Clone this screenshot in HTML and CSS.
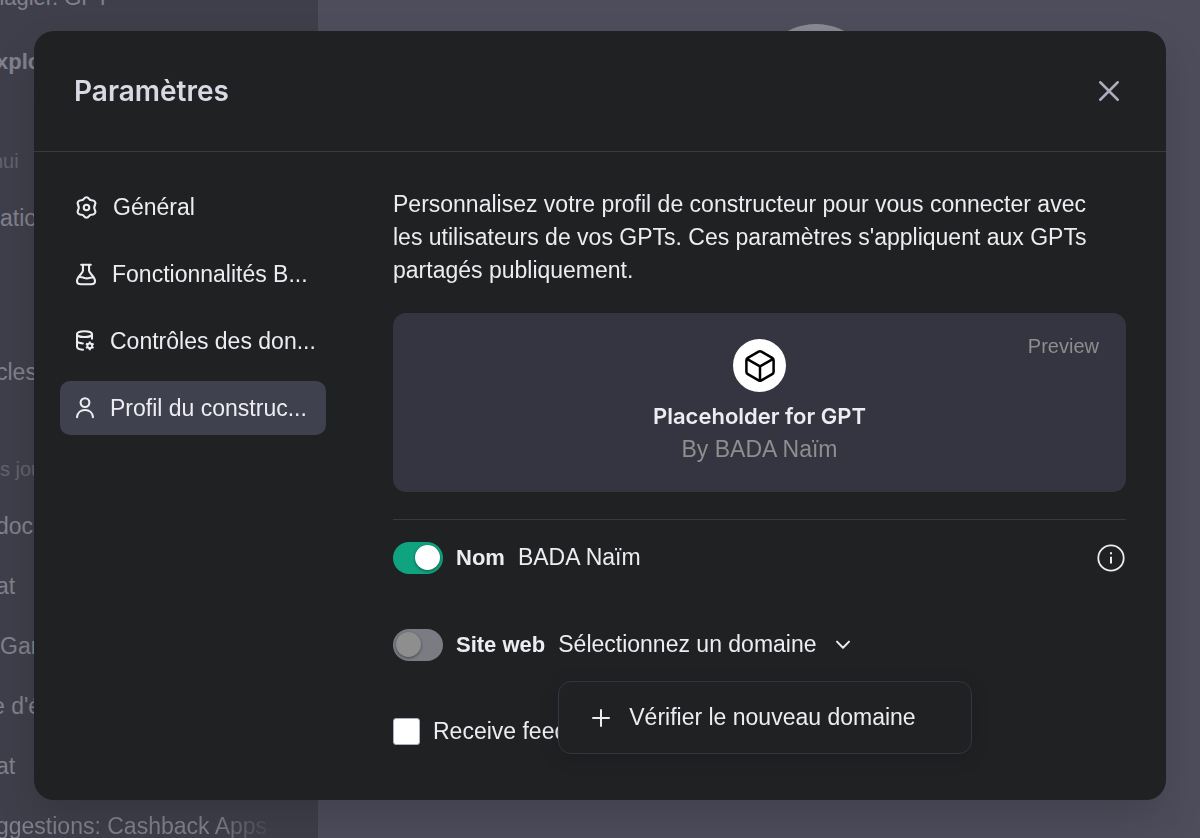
FILE: index.html
```html
<!DOCTYPE html>
<html lang="fr">
<head>
<meta charset="utf-8">
<meta name="viewport" content="width=device-width, initial-scale=1">
<title>Paramètres</title>
<link rel="stylesheet" href="styles.css">
</head>
<body>
<div class="app">
  <aside class="sidebar">
    <ul class="history history-top">
      <li class="deep">nagier. GPT</li>
      <li class="strong">xplorer</li>
    </ul>
    <h3 class="period deep">hui</h3>
    <ul class="history"><li class="flush">ations</li></ul>
    <ul class="history spaced"><li>cles</li></ul>
    <h3 class="period">s jours</h3>
    <ul class="history">
      <li>documents</li>
      <li>at</li>
      <li class="flush">Games</li>
      <li class="deep">e d'écran</li>
      <li>at</li>
      <li class="fade">ggestions: Cashback Apps</li>
    </ul>
  </aside>
  <main class="chat"><div class="chat-logo"></div></main>
</div>

<div class="overlay">
  <section class="modal" role="dialog" aria-labelledby="modal-title">
    <header class="modal-header">
      <h2 id="modal-title">Paramètres</h2>
      <button class="close" type="button" aria-label="Fermer">
        <svg width="30" height="30" viewBox="0 0 24 24" fill="none" stroke="currentColor" stroke-width="2" stroke-linecap="round"><path d="M5 5 19 19M19 5 5 19"/></svg>
      </button>
    </header>
    <div class="modal-body">
      <nav class="tabs">
        <button class="tab" type="button">
          <svg width="23" height="23" viewBox="0 0 24 24" fill="none" stroke="currentColor" stroke-width="2.2" stroke-linejoin="round"><path d="M9.6 2.7C10.7 .9 13.3 .9 14.4 2.7C15 3.9 16 4.5 17.3 4.5C20.3 4.4 22.2 6.6 20.9 9C20 10.6 20 13.4 20.9 15C22.2 17.4 20.3 19.6 17.3 19.5C16 19.5 15 20.1 14.4 21.3C13.3 23.1 10.7 23.1 9.6 21.3C9 20.1 8 19.5 6.7 19.5C3.7 19.6 1.8 17.4 3.1 15C4 13.4 4 10.6 3.1 9C1.8 6.6 3.7 4.4 6.7 4.5C8 4.5 9 3.9 9.6 2.7Z"/><circle cx="12" cy="12" r="2.9"/></svg>
          <span>Général</span>
        </button>
        <button class="tab" type="button">
          <svg width="22" height="23" viewBox="0 0 22 24" fill="none" stroke="currentColor" stroke-width="2.2" stroke-linecap="round" stroke-linejoin="round"><path d="M6 1.8H16M7.8 1.8V8.2C7.8 10.8 1.6 14.1 1.6 18.8C1.6 21.1 3.3 22.2 5.8 22.2H16.2C18.7 22.2 20.4 21.1 20.4 18.8C20.4 14.1 14.2 10.8 14.2 8.2V1.8M3.2 14.8C7 13.8 9.2 16.2 12 16C14.6 15.9 16.4 14.7 18.8 14.8"/></svg>
          <span>Fonctionnalités B...</span>
        </button>
        <button class="tab" type="button">
          <svg width="20" height="22" viewBox="0 0 20 22" fill="none" stroke="currentColor" stroke-width="2"><ellipse cx="9.5" cy="4.2" rx="7.5" ry="2.9"/><path stroke-linecap="round" d="M2 4.2V16.6C2 18.4 4.5 19.6 8 19.8M2 10.6C2 12.2 4.6 13.2 7.8 13.4M17 4.2V8.8"/><circle cx="14.8" cy="15.8" r="2.4"/><path stroke-width="2" d="M14.8 11.4V13.4M14.8 18.2V20.2M11 13.6 12.7 14.6M16.9 17 18.6 18M18.6 13.6 16.9 14.6M12.7 17 11 18"/></svg>
          <span>Contrôles des don...</span>
        </button>
        <button class="tab active" type="button" aria-current="page">
          <svg width="20" height="22" viewBox="0 0 20 22" fill="none" stroke="currentColor" stroke-width="2.1" stroke-linecap="round"><circle cx="10" cy="5.6" r="4.4"/><path d="M2 20.2C2.4 15.8 5.6 13 10 13S17.6 15.8 18 20.2"/></svg>
          <span>Profil du construc...</span>
        </button>
      </nav>

      <div class="panel">
        <p class="intro">Personnalisez votre profil de constructeur pour vous connecter avec les utilisateurs de vos GPTs. Ces paramètres s'appliquent aux GPTs partagés publiquement.</p>

        <div class="preview">
          <span class="preview-tag">Preview</span>
          <div class="avatar">
            <svg width="34" height="34" viewBox="0 0 34 34" fill="none" stroke="#000" stroke-width="2.5" stroke-linejoin="round"><path d="M15.6 2.6Q17 1.8 18.4 2.6L29.2 8.8Q30.6 9.6 30.6 11.2V22.8Q30.6 24.4 29.2 25.2L18.4 31.4Q17 32.2 15.6 31.4L4.8 25.2Q3.4 24.4 3.4 22.8V11.2Q3.4 9.6 4.8 8.8ZM3.8 9.8 17 17.3 30.2 9.8M17 17.3V31.8"/></svg>
          </div>
          <strong class="preview-name">Placeholder for GPT</strong>
          <span class="preview-by">By BADA Naïm</span>
        </div>

        <div class="settings">
          <div class="row">
            <input class="switch" type="checkbox" id="show-name" checked>
            <label class="row-label" for="show-name">Nom</label>
            <span>BADA Naïm</span>
            <button class="info" type="button" aria-label="Informations">
              <svg width="30" height="30" viewBox="0 0 30 30" fill="none" stroke="currentColor"><circle cx="15" cy="15" r="12.7" stroke-width="1.8"/><path stroke-width="2" d="M15 13.8V20.4M15 9.2V11.2"/></svg>
            </button>
          </div>
          <div class="row">
            <input class="switch" type="checkbox" id="show-site" disabled>
            <label class="row-label" for="show-site">Site web</label>
            <div class="domain">
              <select class="domain-select" aria-label="Domaine"><option>Sélectionnez un domaine</option></select>
              <svg class="chevron" width="16" height="10" viewBox="0 0 16 10" fill="none" stroke="currentColor" stroke-width="2" stroke-linecap="round" stroke-linejoin="round"><path d="M2 1.6 8 7.8 14 1.6"/></svg>
              <div class="menu">
                <button class="menu-item" type="button">
                  <svg width="20" height="20" viewBox="0 0 20 20" fill="none" stroke="currentColor" stroke-width="2" stroke-linecap="round"><path d="M10 2V18M2 10H18"/></svg>
                  <span>Vérifier le nouveau domaine</span>
                </button>
              </div>
            </div>
          </div>
          <div class="row">
            <input class="check" type="checkbox" id="feedback">
            <label for="feedback">Receive feedback emails</label>
          </div>
        </div>
      </div>
    </div>
  </section>
</div>
</body>
</html>
```
FILE: styles.css
```css
* { box-sizing: border-box; }

body {
  margin: 0;
  background: #4d4d5c;
  color: #ececf1;
  font: 23px/33px "Liberation Sans", Arial, sans-serif;
}

h2, h3, p, ul { margin: 0; padding: 0; font-weight: 400; }

button, select, input { font: inherit; color: inherit; margin: 0; }

button {
  border: 0;
  padding: 0;
  background: none;
  cursor: pointer;
}

svg { display: block; flex: none; }

.app {
  display: flex;
  height: 100vh;
  overflow: hidden;
}

.sidebar {
  flex: none;
  width: 318px;
  overflow: hidden;
  background: #3f3f4b;
  color: #81818d;
}

.history { list-style: none; }
.history li {
  height: 60px;
  margin-left: -4px;
  line-height: 60px;
  white-space: nowrap;
}
.history-top { margin-top: -34px; }
.history-top li { height: 64px; line-height: 64px; font-size: 22px; }
.history .strong { font-weight: 700; }
.history.spaced { padding-top: 94px; }
.history .flush { margin-left: 0; }
.history .deep, .period.deep { margin-left: -8px; }
.history .fade {
  width: 280px;
  background: linear-gradient(90deg, #81818d 220px, #3f3f4b 280px);
  background-clip: text;
  color: transparent;
}

.period {
  margin-top: 40px;
  height: 54px;
  font-size: 20px;
  line-height: 54px;
  white-space: nowrap;
  color: #62626e;
}

.chat {
  flex: 1;
  display: flex;
  justify-content: center;
  padding: 24px 0 0 114px;
}
.chat-logo {
  width: 120px;
  height: 120px;
  border-radius: 50%;
  background: #898993;
}

.overlay {
  position: fixed;
  inset: 0;
  padding: 31px 34px 38px;
  display: flex;
}

.modal {
  flex: 1;
  display: flex;
  flex-direction: column;
  border-radius: 20px;
  background: #202123;
  box-shadow: 0 20px 40px rgba(0, 0, 0, 0.14);
}

.modal-header {
  display: flex;
  align-items: center;
  justify-content: space-between;
  padding: 40px;
  border-bottom: 1px solid #3a3b3e;
}
.modal-header h2 {
  font-family: Inter, sans-serif;
  font-size: 28px;
  font-weight: 600;
  line-height: 40px;
  color: #d9d9e3;
}
.close { padding: 0 2px; color: #acacbe; }

.modal-body {
  display: grid;
  grid-template-columns: 266px minmax(0, 1fr);
  column-gap: 67px;
  padding: 28px 40px 40px 26px;
}

.tabs { display: flex; flex-direction: column; gap: 13px; }
.tab {
  display: flex;
  align-items: center;
  gap: 15px;
  height: 54px;
  padding: 0 15px;
  border-radius: 10px;
  text-align: left;
  white-space: nowrap;
}
.tab.active { background: #40414f; }

.panel { padding-top: 8px; }
.intro { padding-right: 20px; }

.preview {
  position: relative;
  display: flex;
  flex-direction: column;
  align-items: center;
  margin-top: 26px;
  padding: 26px 27px;
  border-radius: 13px;
  background: #343541;
}
.preview-tag {
  position: absolute;
  top: 17px;
  right: 27px;
  font-size: 20px;
  color: #8e8e8e;
}
.avatar {
  display: grid;
  place-items: center;
  width: 53px;
  height: 53px;
  margin-bottom: 8px;
  border-radius: 50%;
  background: #fff;
}
.preview-name { font-family: Inter, sans-serif; font-size: 22px; font-weight: 600; }
.preview-by { color: #8e8e8e; }

.settings {
  display: flex;
  flex-direction: column;
  gap: 54px;
  margin-top: 27px;
  padding-top: 21px;
  border-top: 1px solid #38393c;
}
.row { display: flex; align-items: center; gap: 13px; }
.row-label { font-size: 22px; font-weight: 700; }

.switch {
  appearance: none;
  flex: none;
  display: flex;
  align-items: center;
  width: 50px;
  height: 32px;
  padding: 0 3px;
  border-radius: 16px;
  background: #7b7b83;
}
.switch::before {
  content: "";
  width: 25px;
  height: 25px;
  border-radius: 50%;
  background: #8e8e8e;
  box-shadow: 0 1px 3px rgba(0, 0, 0, 0.45);
}
.switch:checked { justify-content: flex-end; background: #10a37f; }
.switch:checked::before { background: #fff; }

.info { margin-left: auto; }

.domain { position: relative; display: flex; align-items: center; gap: 18px; }
.domain-select {
  appearance: none;
  border: 0;
  padding: 0;
  background: none;
}

.menu {
  position: absolute;
  top: 53px;
  left: 0;
  padding: 19px 55px 19px 32px;
  border: 1px solid #343541;
  border-radius: 13px;
  background: #202123;
  box-shadow: 0 4px 20px rgba(0, 0, 0, 0.12);
}
.menu-item {
  display: flex;
  align-items: center;
  gap: 18px;
  white-space: nowrap;
}

.check {
  appearance: none;
  flex: none;
  width: 27px;
  height: 27px;
  border: 1px solid #acacbe;
  border-radius: 3px;
  background: #fff;
}
```
